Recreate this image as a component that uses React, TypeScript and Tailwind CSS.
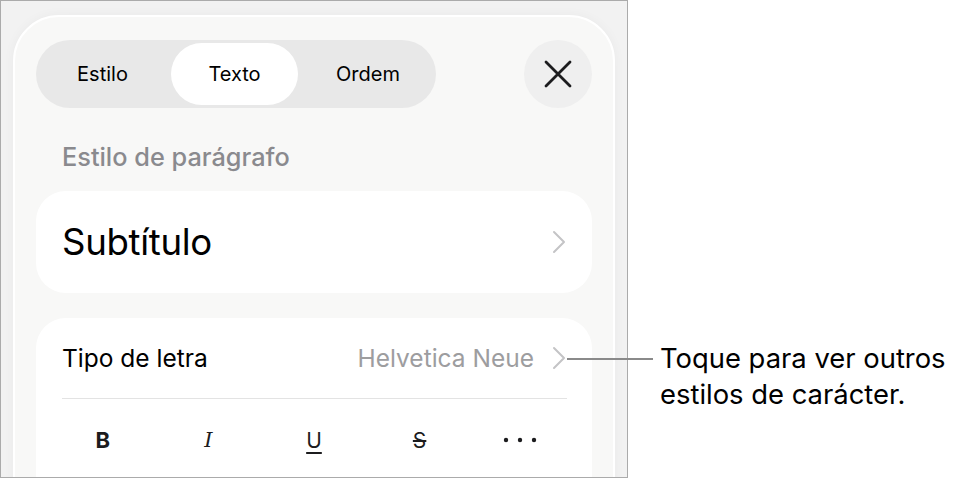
import React from "react";

const font = { fontFamily: "Inter, 'Noto Sans', sans-serif" };

function Chevron({ className = "" }: { className?: string }) {
  return (
    <svg width="14" height="24" viewBox="0 0 14 24" className={className}>
      <path d="M2 2 L12 12 L2 22" fill="none" stroke="#c4c4c6" strokeWidth="2" strokeLinecap="round" strokeLinejoin="round" />
    </svg>
  );
}

export default function App() {
  return (
    <div className="w-[955px] h-[479px] bg-white flex relative overflow-hidden" style={font}>
      <div className="w-[628px] h-[478px] border border-[#ababab] bg-[#f2f2f2] overflow-hidden shrink-0">
        <div className="ml-[12px] mt-[14px] w-[602px] h-[520px] rounded-[46px] border-2 border-white bg-[#f8f8f7] shadow-[0_0_12px_rgba(0,0,0,0.04)] pt-[23px] px-[21px]">
          <div className="flex items-center justify-between">
            <div className="w-[400px] h-[68px] rounded-full bg-[#e8e8e8] p-[3px] flex justify-between">
              <div className="w-[127px] flex items-center justify-center text-[20px] text-black">Estilo</div>
              <div className="w-[127px] flex items-center justify-center text-[20px] text-black bg-white rounded-full">Texto</div>
              <div className="w-[130px] flex items-center justify-center text-[20px] text-black">Ordem</div>
            </div>
            <div className="w-[68px] h-[68px] rounded-full bg-[#efefef] flex items-center justify-center">
              <svg width="28" height="28" viewBox="0 0 28 28">
                <path d="M2 2 L26 26 M26 2 L2 26" stroke="#1c1c1e" strokeWidth="2.8" strokeLinecap="round" />
              </svg>
            </div>
          </div>

          <div className="mt-[34px] pl-[26px] text-[25.3px] leading-[30px] font-medium text-[#8a8a8e]">Estilo de parágrafo</div>

          <div className="mt-[19px] h-[102px] rounded-[30px] bg-white flex items-center justify-between pl-[26px] pr-[26px]">
            <span className="text-[36.6px] text-black tracking-[-0.3px]">Subtítulo</span>
            <Chevron />
          </div>

          <div className="mt-[25px] rounded-[30px] bg-white px-[26px] h-[200px]">
            <div className="h-[80px] flex items-center justify-between">
              <span className="text-[24.5px] text-black">Tipo de letra</span>
              <div className="flex items-center gap-[18px]">
                <span className="text-[24.5px] text-[#9d9d9f]">Helvetica Neue</span>
                <Chevron />
              </div>
            </div>
            <div className="h-px bg-[#e3e3e3] mr-[-1px]" />
            <div className="-mx-[12px] grid grid-cols-5 h-[86px] items-start pt-[26px] text-[21px] text-[#1c1c1e]">
              <div className="flex justify-center font-bold text-[22px] leading-[30px]">B</div>
              <div className="flex justify-center">
                <span className="italic font-light" style={{ fontFamily: "'DejaVu Serif', serif" }}>I</span>
              </div>
              <div className="flex justify-center">
                <span className="underline underline-offset-[4px] decoration-[1.5px]">U</span>
              </div>
              <div className="flex justify-center">
                <span className="line-through decoration-[1.5px]">S</span>
              </div>
              <div className="flex justify-center items-center h-[30px] pr-[10px]">
                <svg width="34" height="6" viewBox="0 0 34 6">
                  <circle cx="3" cy="3" r="2.2" fill="#1c1c1e" />
                  <circle cx="17" cy="3" r="2.2" fill="#1c1c1e" />
                  <circle cx="31" cy="3" r="2.2" fill="#1c1c1e" />
                </svg>
              </div>
            </div>
          </div>
        </div>
      </div>

      <div className="absolute left-[567px] top-[358px] w-[86px] h-[2px] bg-[#8a8a8a]" />

      <div className="pl-[32px] pt-[340px] text-[27.4px] leading-[36px] text-black">
        <div>Toque para ver outros</div>
        <div>estilos de carácter.</div>
      </div>
    </div>
  );
}
